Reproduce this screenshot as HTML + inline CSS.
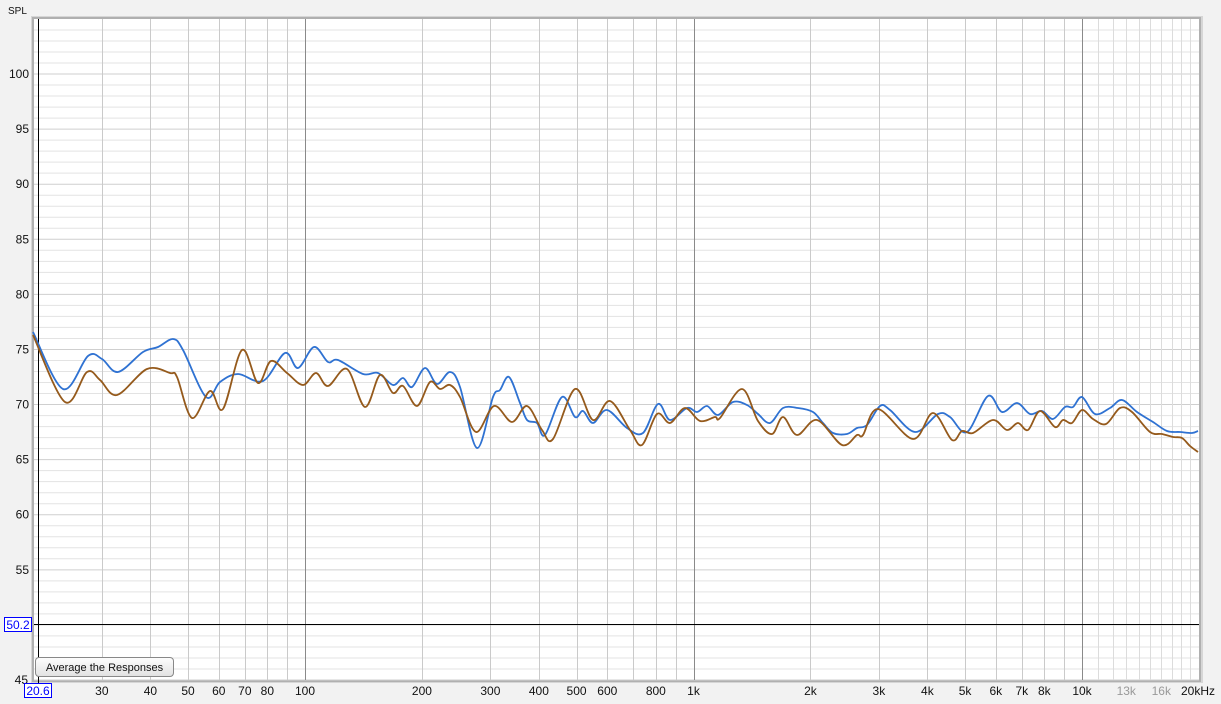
<!DOCTYPE html>
<html><head><meta charset="utf-8"><style>
html,body{margin:0;padding:0;width:1221px;height:704px;overflow:hidden;background:#f2f2f2;font-family:"Liberation Sans",sans-serif}
svg{position:absolute;left:0;top:0}
.btn{position:absolute;left:35px;top:657px;width:139px;height:20px;border:1px solid #888;border-radius:4px;background:linear-gradient(#fdfdfd,#e2e2e2);font-size:11px;line-height:20px;text-align:center;color:#111;box-sizing:border-box}
</style></head><body>
<svg id="s" width="1221" height="704" xmlns="http://www.w3.org/2000/svg" font-family="Liberation Sans, sans-serif" font-size="12"></svg>
<div class="btn">Average the Responses</div>
<script>
var s=document.getElementById('s'),h='';
function X(f){return 305+(Math.log10(f)-2)*388.5}
function Y(d){return 680-(d-45)*11.018}
h+='<rect x="31" y="16" width="1172" height="667" fill="#d6d6d6"/><rect x="32" y="17" width="1169" height="665" fill="#b0b0b0"/><rect x="34" y="19" width="1165" height="661" fill="#fff"/>';
for(var d=45;d<=104;d++){var y=Y(d);h+='<line x1="34" x2="1199" y1="'+y+'" y2="'+y+'" stroke="'+(d%5==0?'#cfcfcf':'#e3e3e3')+'" stroke-width="1"/>';}
var fs=[];
[30,40,50,60,70,80,90,200,300,400,500,600,700,800,900,2000,3000,4000,5000,6000,7000,8000,9000].forEach(function(f){fs.push([f,'#cacaca'])});
for(var f=11000;f<=19000;f+=1000)fs.push([f,'#dcdcdc']);
[100,1000,10000].forEach(function(f){fs.push([f,'#8a8a8a'])});
fs.forEach(function(a){var x=Math.round(X(a[0]))+0.5;h+='<line x1="'+x+'" x2="'+x+'" y1="19" y2="680" stroke="'+a[1]+'"/>'});
h+='<line x1="34" x2="1199" y1="624.5" y2="624.5" stroke="#000"/><line x1="38.5" x2="38.5" y1="19" y2="683" stroke="#000"/>';
for(var d=50;d<=100;d+=5){h+='<text x="29" y="'+(Y(d)+4)+'" text-anchor="end" fill="#111">'+d+'</text>'}
h+='<text x="28" y="684" text-anchor="end" fill="#111">45</text><text x="8" y="14" fill="#111" font-size="10">SPL</text>';
h+='<rect x="4.5" y="617.5" width="27" height="14" fill="#fff" stroke="#00f"/><text x="18" y="629" text-anchor="middle" fill="#00f">50.2</text>';
h+='<rect x="24.5" y="683.5" width="27" height="14" fill="#fff" stroke="#00f"/><text x="38" y="695" text-anchor="middle" fill="#00f">20.6</text>';
[[30,'30'],[40,'40'],[50,'50'],[60,'60'],[70,'70'],[80,'80'],[100,'100'],[200,'200'],[300,'300'],[400,'400'],[500,'500'],[600,'600'],[800,'800'],[1000,'1k'],[2000,'2k'],[3000,'3k'],[4000,'4k'],[5000,'5k'],[6000,'6k'],[7000,'7k'],[8000,'8k'],[10000,'10k'],[13000,'13k',1],[16000,'16k',1]].forEach(function(a){h+='<text x="'+X(a[0])+'" y="695" text-anchor="middle" fill="'+(a[2]?'#999':'#111')+'">'+a[1]+'</text>'});
h+='<text x="1198" y="695" text-anchor="middle" fill="#111">20kHz</text>';
function path(p){var d='M'+p[0][0]+','+p[0][1];for(var i=0;i<p.length-1;i++){var p0=p[i-1]||p[i],p1=p[i],p2=p[i+1],p3=p[i+2]||p2;d+=' C'+(p1[0]+(p2[0]-p0[0])/6)+','+(p1[1]+(p2[1]-p0[1])/6)+' '+(p2[0]-(p3[0]-p1[0])/6)+','+(p2[1]-(p3[1]-p1[1])/6)+' '+p2[0]+','+p2[1];}return d}
var blue=[[33,332],[63,389],[88,356],[102,359],[118,372],[143,352],[158,347],[173,339],[183,350],[206,397],[220,382],[238,374],[263,381],[285,353],[298,368],[314,347],[328,362],[338,360],[363,374],[378,373],[393,385],[403,378],[412,387],[425,368],[437,384],[450,372],[460,387],[477,448],[493,397],[500,390],[509,377],[520,403],[527,420],[537,423],[545,435],[562,397],[575,417],[583,411],[593,423],[607,410],[627,428],[643,433],[658,404],[670,420],[687,408],[697,412],[707,406],[718,415],[733,402],[747,405],[758,414],[770,423],[783,408],[798,408],[813,412],[823,423],[833,433],[847,434],[857,428],[867,425],[880,406],[890,410],[915,432],[938,414],[950,417],[967,432],[988,396],[1002,412],[1017,403],[1030,414],[1042,411],[1053,419],[1065,407],[1073,407],[1082,397],[1095,414],[1110,408],[1122,400],[1137,412],[1153,422],[1167,431],[1180,432],[1192,433],[1198,431]];
var brown=[[33,335],[65,402],[87,372],[100,380],[117,395],[147,369],[170,373],[177,377],[192,418],[210,391],[223,409],[242,350],[258,383],[271,361],[287,373],[303,385],[316,373],[328,386],[347,369],[365,407],[380,375],[393,393],[403,386],[417,406],[430,382],[440,389],[450,385],[460,397],[476,432],[494,406],[512,422],[527,406],[542,430],[553,439],[575,389],[593,420],[610,401],[630,430],[642,445],[657,414],[670,423],[685,408],[700,421],[715,417],[720,418],[742,389],[758,421],[772,434],[783,417],[797,435],[817,420],[842,445],[857,435],[863,435],[878,409],[913,439],[933,413],[952,440],[962,431],[973,433],[993,420],[1007,430],[1018,423],[1028,430],[1040,411],[1055,427],[1063,420],[1072,423],[1082,410],[1093,419],[1106,424],[1120,408],[1132,412],[1150,432],[1162,434],[1173,437],[1182,438],[1190,446],[1198,452]];
h+='<path d="'+path(blue)+'" fill="none" stroke="#2f72d2" stroke-width="1.8"/>';
h+='<path d="'+path(brown)+'" fill="none" stroke="#955a1c" stroke-width="1.8"/>';
s.innerHTML=h;
</script>
</body></html>
